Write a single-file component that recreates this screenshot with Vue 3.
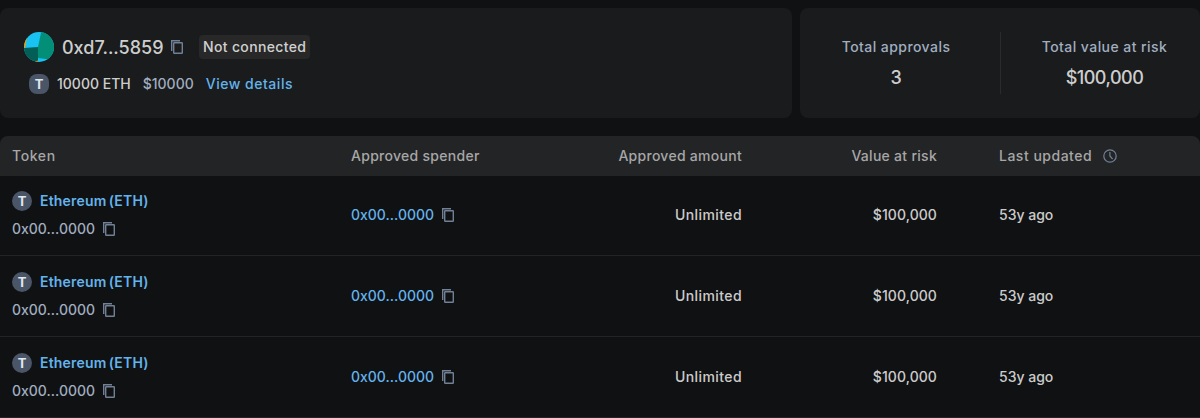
<script setup>
import { h } from 'vue'

const rows = [1, 2, 3]

const CopyIcon = () =>
  h('svg', { class: 'copy', width: 20, height: 20, viewBox: '0 0 20 20', fill: 'none', stroke: '#718096', 'stroke-width': 1.4 }, [
    h('path', { d: 'M4.7 14V3.7H13' }),
    h('rect', { x: 6.7, y: 5.7, width: 8.6, height: 10.6, rx: 0.5 }),
  ])
</script>

<template>
  <main class="page">
    <section class="summary">
      <div class="card account">
        <div class="line address-line">
          <svg class="avatar" width="30" height="30" viewBox="0 0 30 30">
            <defs><clipPath id="round"><circle cx="15" cy="15" r="15" /></clipPath></defs>
            <g clip-path="url(#round)">
              <rect width="30" height="30" fill="#18c3f4" />
              <path d="M0 16 14 15V30H0Z" fill="#035e56" />
              <path d="M17.200 0H30V28L14 26V15Z" fill="#038f77" />
              <path d="M0 6H3L1 16H0ZM9 30 14 28.500V30Z" fill="#f29a05" />
            </g>
          </svg>
          <span class="heading address">0xd7...5859</span>
          <CopyIcon />
          <span class="tag">Not connected</span>
        </div>
        <div class="line balance-line">
          <span class="token square">T</span>
          <span class="balance">10000 ETH</span>
          <span class="usd">$10000</span>
          <a class="link details">View details</a>
        </div>
      </div>
      <div class="card totals">
        <div class="total">
          <span class="label">Total approvals</span>
          <span class="heading value">3</span>
        </div>
        <div class="total">
          <span class="label">Total value at risk</span>
          <span class="heading value">$100,000</span>
        </div>
      </div>
    </section>

    <section class="table">
      <div class="grid head">
        <span class="token-head">Token</span>
        <span>Approved spender</span>
        <span class="right">Approved amount</span>
        <span class="right">Value at risk</span>
        <span class="updated">
          Last updated
          <svg width="14" height="14" viewBox="0 0 14 14" fill="none" stroke="#718096" stroke-width="1.2">
            <circle cx="7" cy="7" r="6.200" />
            <path d="M6.900 3V7L9.600 10" />
          </svg>
        </span>
      </div>
      <div v-for="row in rows" :key="row" class="grid row">
        <div>
          <div class="line"><span class="token">T</span><a class="link name">Ethereum (ETH)</a></div>
          <div class="line hash"><span>0x00...0000</span><CopyIcon /></div>
        </div>
        <div class="line"><a class="link">0x00...0000</a><CopyIcon /></div>
        <span class="right amount">Unlimited</span>
        <span class="right risk">$100,000</span>
        <span>53y ago</span>
      </div>
    </section>
  </main>
</template>

<style>
body {
  background: #101112;
}
</style>

<style scoped>
.page {
  height: 418px;
  box-sizing: border-box;
  padding-top: 8px;
  overflow: hidden;
  background: #101112;
  color: rgba(255, 255, 255, 0.8);
  font: 500 14px/20px Inter, sans-serif;
}
.summary {
  display: grid;
  grid-template-columns: 792px 400px;
  gap: 8px;
  height: 110px;
}
.card {
  box-sizing: border-box;
  background: #1a1b1c;
  border-radius: 8px;
}
.account {
  padding: 24px;
}
.line {
  display: flex;
  align-items: center;
}
.address-line {
  height: 30px;
}
.heading {
  font-size: 18px;
  line-height: 24px;
}
.address {
  width: 101px;
  margin-left: 8px;
  padding-top: 1px;
  white-space: nowrap;
}
.value {
  margin-top: 2px;
  letter-spacing: -0.5px;
}
.copy {
  flex: none;
  margin-left: 4px;
}
.tag {
  margin-left: 12px;
  padding: 2px 4px;
  border-radius: 4px;
  background: #282828;
  letter-spacing: 0.35px;
}
.balance-line {
  margin-top: 12px;
  height: 20px;
  padding-left: 5px;
}
.token {
  flex: none;
  width: 20px;
  height: 20px;
  border-radius: 50%;
  background: #4a5568;
  color: #e2e8f0;
  text-align: center;
  font-size: 13px;
  font-weight: 700;
}
.square {
  border-radius: 8px;
}
.balance {
  margin-left: 8px;
}
.usd {
  margin-left: 12px;
  color: #a0aec0;
}
.link {
  color: #63b3ed;
}
.details {
  margin-left: 12px;
  letter-spacing: 0.52px;
}
.totals {
  display: grid;
  grid-template-columns: 1fr 1fr;
  padding: 24px 0;
}
.total {
  display: flex;
  flex-direction: column;
  align-items: center;
  gap: 7px;
  padding: 5px 8px 0 0;
}
.total + .total {
  padding: 5px 0 0 8px;
  border-left: 1px solid #2a2b2c;
}
.label {
  color: #a0aec0;
  letter-spacing: 0.44px;
}
.table {
  margin-top: 18px;
}
.grid {
  display: grid;
  grid-template-columns: 339px 195px 196px 195px 1fr;
  align-items: center;
  box-sizing: border-box;
  padding-left: 12px;
}
.grid > :last-child {
  padding-left: 62px;
}
.head {
  height: 40px;
  margin-bottom: -1px;
  border-radius: 8px 8px 0 0;
  background: #232425;
  color: #a7a7a8;
  letter-spacing: 0.28px;
}
.token-head {
  letter-spacing: 0.6px;
}
.right {
  text-align: right;
}
.updated {
  display: flex;
  align-items: center;
  gap: 10.500px;
  letter-spacing: 0.5px;
}
.row {
  height: 81px;
  border-bottom: 1px solid #232425;
}
.amount {
  letter-spacing: 0.42px;
}
.risk {
  letter-spacing: 0.08px;
}
.name {
  margin-left: 8px;
  font-weight: 600;
  letter-spacing: 0.18px;
  word-spacing: -1.4px;
}
.hash {
  margin-top: 8px;
  color: #a0aec0;
}
</style>
